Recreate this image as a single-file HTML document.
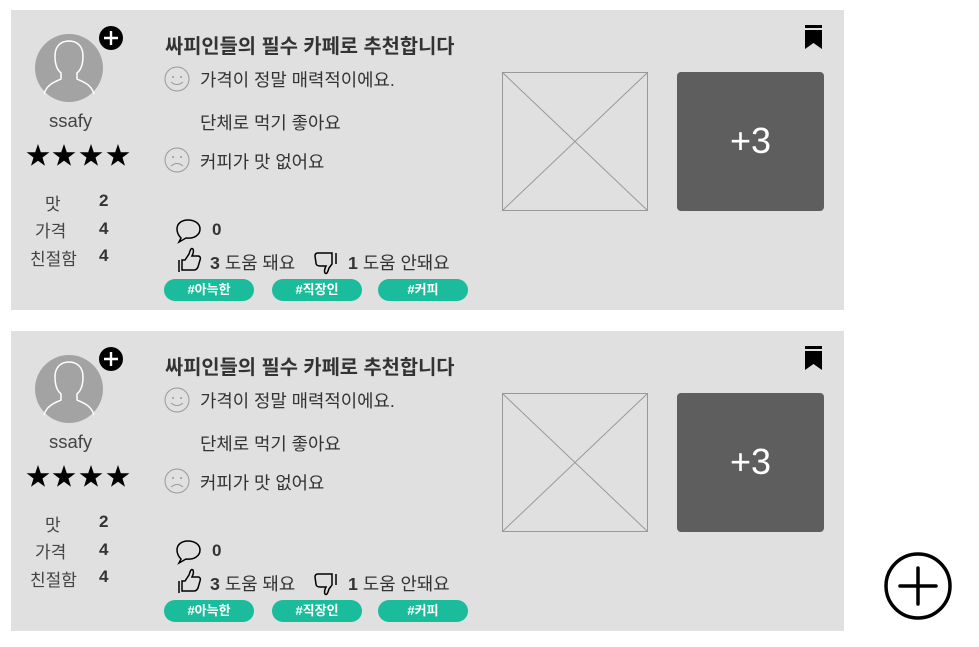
<!DOCTYPE html>
<html><head><meta charset="utf-8"><style>
*{margin:0;padding:0;box-sizing:border-box}
body{width:979px;height:647px;background:#fff;position:relative;overflow:hidden;font-family:"Liberation Sans","Noto Sans CJK KR",sans-serif;color:#333}
.card{position:absolute;left:11px;width:833px;height:300px;background:#e0e0e0}
.a{position:absolute;white-space:nowrap}
.tag{position:absolute;top:269px;width:90px;height:22px;border-radius:11px;background:#1abc9c;color:#fff;font-weight:bold;font-size:13px;text-align:center;line-height:22px}
.t{font-size:17.8px;line-height:20px}
.l{font-size:17px;color:#444}
</style></head><body>
<div class="card" style="top:10px">
<svg class="a" style="left:0;top:0" width="833" height="300">
<defs><polygon id="st" points="0,-12 2.8,-3.8 11.4,-3.7 4.5,1.5 7,9.7 0,4.8 -7,9.7 -4.5,1.5 -11.4,-3.7 -2.8,-3.8"/></defs>
<circle cx="58" cy="58" r="34" fill="#a3a3a3"/>
<path d="M33 84 C36 74 44 72 50 69 L50 63 C45 59 44 52 44 46 C44 36 50 31 58 31 C66 31 72 36 72 46 C72 52 71 59 66 63 L66 69 C72 72 80 74 83 84" fill="none" stroke="#fff" stroke-width="1.5"/>
<circle cx="100" cy="28" r="12" fill="#000"/>
<path d="M100 21v14M93 28h14" stroke="#fff" stroke-width="2.4"/>
<g fill="#000"><use href="#st" x="27" y="146"/><use href="#st" x="53" y="146"/><use href="#st" x="80" y="146"/><use href="#st" x="107" y="146"/></g>
<circle cx="166" cy="69" r="12" fill="none" stroke="#999"/>
<circle cx="162" cy="67" r="1" fill="#999"/><circle cx="170" cy="67" r="1" fill="#999"/>
<path d="M160 72 Q166 77 172 72" fill="none" stroke="#999"/>
<circle cx="166" cy="150" r="12" fill="none" stroke="#999"/>
<circle cx="162" cy="147" r="1" fill="#999"/><circle cx="170" cy="147" r="1" fill="#999"/>
<path d="M160 156 Q166 151 172 156" fill="none" stroke="#999"/>
<path d="M170 228 L168 232 L175 228 C183 229 189 225 189 219 C189 213 183 210 177 210 C170 210 166 214 166 219 C166 223 168 226 170 228 Z" fill="none" stroke="#000" stroke-width="1.5"/>
<path d="M168 250v12M171 250h3l4-6c1-3 2-7 4-5c1 2 0 5-1 7h6c2 0 3 2 2 4l-2 7c-1 2-2 3-4 3h-12z" fill="none" stroke="#000" stroke-width="1.5"/>
<path d="M325 243v11M321 243h-14c-2 0-3 1-3 3l1 7c0 2 2 3 4 3h6c-1 2-2 5-1 7c2 2 3-2 4-5l3-4z" fill="none" stroke="#000" stroke-width="1.5"/>
<rect x="491.5" y="62.5" width="145" height="138" fill="none" stroke="#999"/>
<path d="M492 63L636 200M636 63L492 200" stroke="#999"/>
<rect x="666" y="62" width="147" height="139" rx="4" fill="#5e5e5e"/>
<path d="M794 15h17v3h-17zM794 20h17v19l-8.5-6-8.5 6z" fill="#000"/>
</svg>
<div class="a" style="left:38px;top:100px;font-size:18.5px;color:#444">ssafy</div>
<div class="a l" style="left:34px;top:180px">맛</div>
<div class="a l" style="left:24px;top:207px">가격</div>
<div class="a l" style="left:19px;top:235px">친절함</div>
<div class="a" style="left:88px;top:181px;font-size:17px;font-weight:bold">2</div>
<div class="a" style="left:88px;top:209px;font-size:17px;font-weight:bold">4</div>
<div class="a" style="left:88px;top:236px;font-size:17px;font-weight:bold">4</div>
<div class="a" style="left:154px;top:20px;font-size:19.8px;font-weight:bold;color:#333">싸피인들의 필수 카페로 추천합니다</div>
<div class="a t" style="left:189px;top:60px">가격이 정말 매력적이에요.</div>
<div class="a t" style="left:189px;top:103px">단체로 먹기 좋아요</div>
<div class="a t" style="left:189px;top:142px">커피가 맛 없어요</div>
<div class="a" style="left:201px;top:210px;font-size:17px;font-weight:bold">0</div>
<div class="a t" style="left:199px;top:243px"><b>3</b> 도움 돼요</div>
<div class="a t" style="left:337px;top:243px"><b>1</b> 도움 안돼요</div>
<div class="tag" style="left:153px">#아늑한</div>
<div class="tag" style="left:261px">#직장인</div>
<div class="tag" style="left:367px">#커피</div>
<div class="a" style="left:666px;top:110px;width:147px;text-align:center;color:#fff;font-size:36px">+3</div>
</div>
<div class="card" style="top:331px">
<svg class="a" style="left:0;top:0" width="833" height="300">
<circle cx="58" cy="58" r="34" fill="#a3a3a3"/>
<path d="M33 84 C36 74 44 72 50 69 L50 63 C45 59 44 52 44 46 C44 36 50 31 58 31 C66 31 72 36 72 46 C72 52 71 59 66 63 L66 69 C72 72 80 74 83 84" fill="none" stroke="#fff" stroke-width="1.5"/>
<circle cx="100" cy="28" r="12" fill="#000"/>
<path d="M100 21v14M93 28h14" stroke="#fff" stroke-width="2.4"/>
<g fill="#000"><use href="#st" x="27" y="146"/><use href="#st" x="53" y="146"/><use href="#st" x="80" y="146"/><use href="#st" x="107" y="146"/></g>
<circle cx="166" cy="69" r="12" fill="none" stroke="#999"/>
<circle cx="162" cy="67" r="1" fill="#999"/><circle cx="170" cy="67" r="1" fill="#999"/>
<path d="M160 72 Q166 77 172 72" fill="none" stroke="#999"/>
<circle cx="166" cy="150" r="12" fill="none" stroke="#999"/>
<circle cx="162" cy="147" r="1" fill="#999"/><circle cx="170" cy="147" r="1" fill="#999"/>
<path d="M160 156 Q166 151 172 156" fill="none" stroke="#999"/>
<path d="M170 228 L168 232 L175 228 C183 229 189 225 189 219 C189 213 183 210 177 210 C170 210 166 214 166 219 C166 223 168 226 170 228 Z" fill="none" stroke="#000" stroke-width="1.5"/>
<path d="M168 250v12M171 250h3l4-6c1-3 2-7 4-5c1 2 0 5-1 7h6c2 0 3 2 2 4l-2 7c-1 2-2 3-4 3h-12z" fill="none" stroke="#000" stroke-width="1.5"/>
<path d="M325 243v11M321 243h-14c-2 0-3 1-3 3l1 7c0 2 2 3 4 3h6c-1 2-2 5-1 7c2 2 3-2 4-5l3-4z" fill="none" stroke="#000" stroke-width="1.5"/>
<rect x="491.5" y="62.5" width="145" height="138" fill="none" stroke="#999"/>
<path d="M492 63L636 200M636 63L492 200" stroke="#999"/>
<rect x="666" y="62" width="147" height="139" rx="4" fill="#5e5e5e"/>
<path d="M794 15h17v3h-17zM794 20h17v19l-8.5-6-8.5 6z" fill="#000"/>
</svg>
<div class="a" style="left:38px;top:100px;font-size:18.5px;color:#444">ssafy</div>
<div class="a l" style="left:34px;top:180px">맛</div>
<div class="a l" style="left:24px;top:207px">가격</div>
<div class="a l" style="left:19px;top:235px">친절함</div>
<div class="a" style="left:88px;top:181px;font-size:17px;font-weight:bold">2</div>
<div class="a" style="left:88px;top:209px;font-size:17px;font-weight:bold">4</div>
<div class="a" style="left:88px;top:236px;font-size:17px;font-weight:bold">4</div>
<div class="a" style="left:154px;top:20px;font-size:19.8px;font-weight:bold;color:#333">싸피인들의 필수 카페로 추천합니다</div>
<div class="a t" style="left:189px;top:60px">가격이 정말 매력적이에요.</div>
<div class="a t" style="left:189px;top:103px">단체로 먹기 좋아요</div>
<div class="a t" style="left:189px;top:142px">커피가 맛 없어요</div>
<div class="a" style="left:201px;top:210px;font-size:17px;font-weight:bold">0</div>
<div class="a t" style="left:199px;top:243px"><b>3</b> 도움 돼요</div>
<div class="a t" style="left:337px;top:243px"><b>1</b> 도움 안돼요</div>
<div class="tag" style="left:153px">#아늑한</div>
<div class="tag" style="left:261px">#직장인</div>
<div class="tag" style="left:367px">#커피</div>
<div class="a" style="left:666px;top:110px;width:147px;text-align:center;color:#fff;font-size:36px">+3</div>
</div>
<svg class="a" style="left:880px;top:548px" width="80" height="80">
<circle cx="38" cy="38" r="32" fill="none" stroke="#000" stroke-width="3.5"/>
<path d="M38 20v36M20 38h36" stroke="#000" stroke-width="3.5" stroke-linecap="round"/>
</svg>
</body></html>
